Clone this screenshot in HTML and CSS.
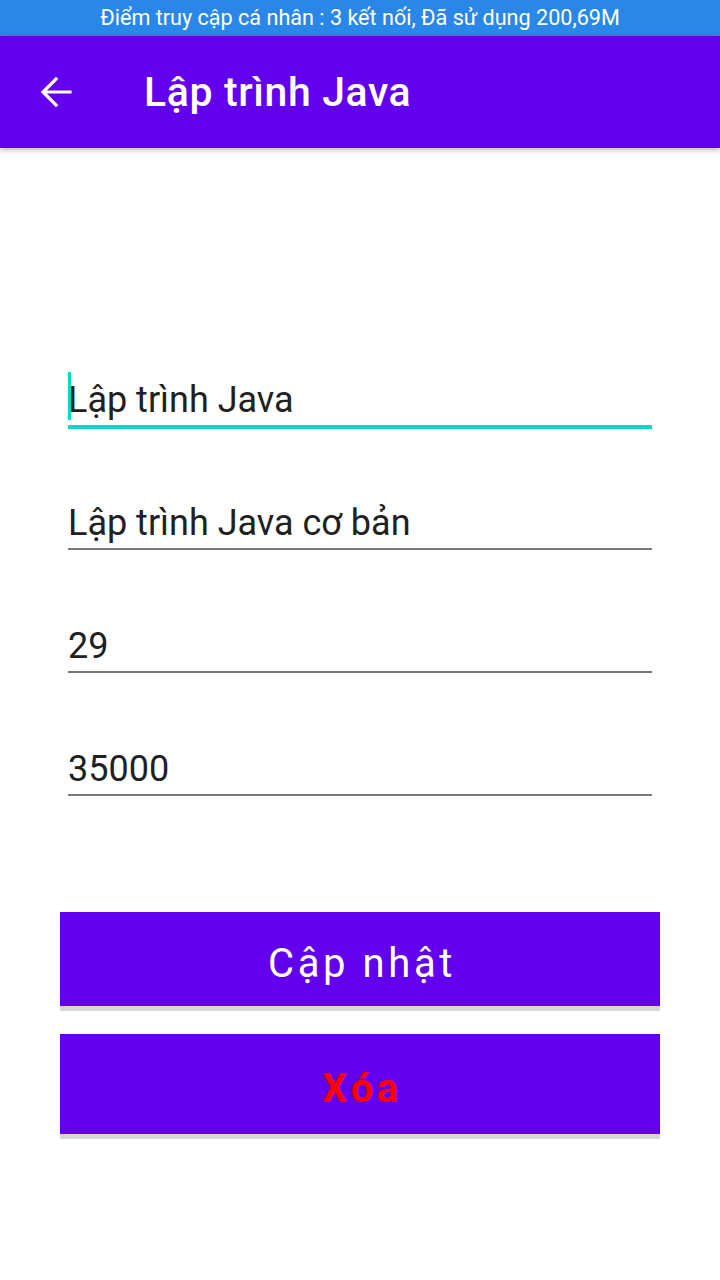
FILE: index.html
```html
<!DOCTYPE html>
<html lang="vi">
<head>
<meta charset="utf-8">
<title>Lập trình Java</title>
<link rel="stylesheet" href="styles.css">
</head>
<body>
<div class="screen">
  <div class="status">Điểm truy cập cá nhân : 3 kết nối, Đã sử dụng 200,69M</div>
  <header class="appbar">
    <svg class="back" width="32" height="32" viewBox="0 0 32 32">
      <path d="M30 16H4M16 3L3 16l13 13" fill="none" stroke="#fff" stroke-width="3.2" stroke-linecap="square"/>
    </svg>
    <h1 class="title">Lập trình Java</h1>
  </header>
  <main class="form">
    <div class="fields">
      <div class="field focused"><span class="caret"></span>Lập trình Java</div>
      <div class="field">Lập trình Java cơ bản</div>
      <div class="field">29</div>
      <div class="field">35000</div>
    </div>
    <div class="buttons">
      <button class="btn btn-update">Cập nhật</button>
      <button class="btn btn-delete">Xóa</button>
    </div>
  </main>
</div>
</body>
</html>
```

FILE: styles.css
```css
* { box-sizing: border-box; }
html, body { margin: 0; padding: 0; background: #fff; }
body { font-family: Roboto, "Noto Sans", sans-serif; width: 720px; height: 1280px; overflow: hidden; }

.status {
  height: 36px;
  background: #2a87e8;
  color: #fff;
  font-size: 21.6px;
  line-height: 36px;
  text-align: center;
  letter-spacing: 0;
}

.appbar {
  height: 112px;
  background: #6200ee;
  display: flex;
  align-items: center;
  padding-left: 40px;
  box-shadow: 0 2px 5px rgba(0, 0, 0, 0.28);
  position: relative;
  z-index: 1;
}
.back { display: block; flex: none; }
.title {
  margin: 0 0 0 72px;
  color: #fff;
  font-size: 41px;
  font-weight: 500;
  letter-spacing: 0.6px;
}

.form { padding: 0 60px; }

.fields {
  padding: 232px 8px 0;
  display: flex;
  flex-direction: column;
  gap: 76px;
}
.field {
  position: relative;
  font-size: 36px;
  line-height: 40px;
  color: #212121;
  padding-bottom: 5px;
  border-bottom: 2px solid #777;
  height: 47px;
}
.field.focused {
  border-bottom: 4px solid #03dac5;
  height: 49px;
  margin-bottom: -2px;
}
.caret {
  position: absolute;
  left: 0;
  top: -8px;
  width: 3px;
  height: 48px;
  background: #03dac5;
}

.buttons {
  padding-top: 116px;
  display: flex;
  flex-direction: column;
  gap: 28px;
}
.btn {
  display: block;
  width: 100%;
  border: 0;
  background: #6200ee;
  font-family: Roboto, sans-serif;
  box-shadow: 0 5px 0 #d6d6d6;
  padding: 8px 0 0 4px;
}
.btn-update {
  height: 94px;
  color: #fff;
  font-size: 40px;
  letter-spacing: 3.6px;
}
.btn-delete {
  height: 100px;
  color: #ff0000;
  font-size: 40px;
  font-weight: 700;
  letter-spacing: 3.6px;
}
```
